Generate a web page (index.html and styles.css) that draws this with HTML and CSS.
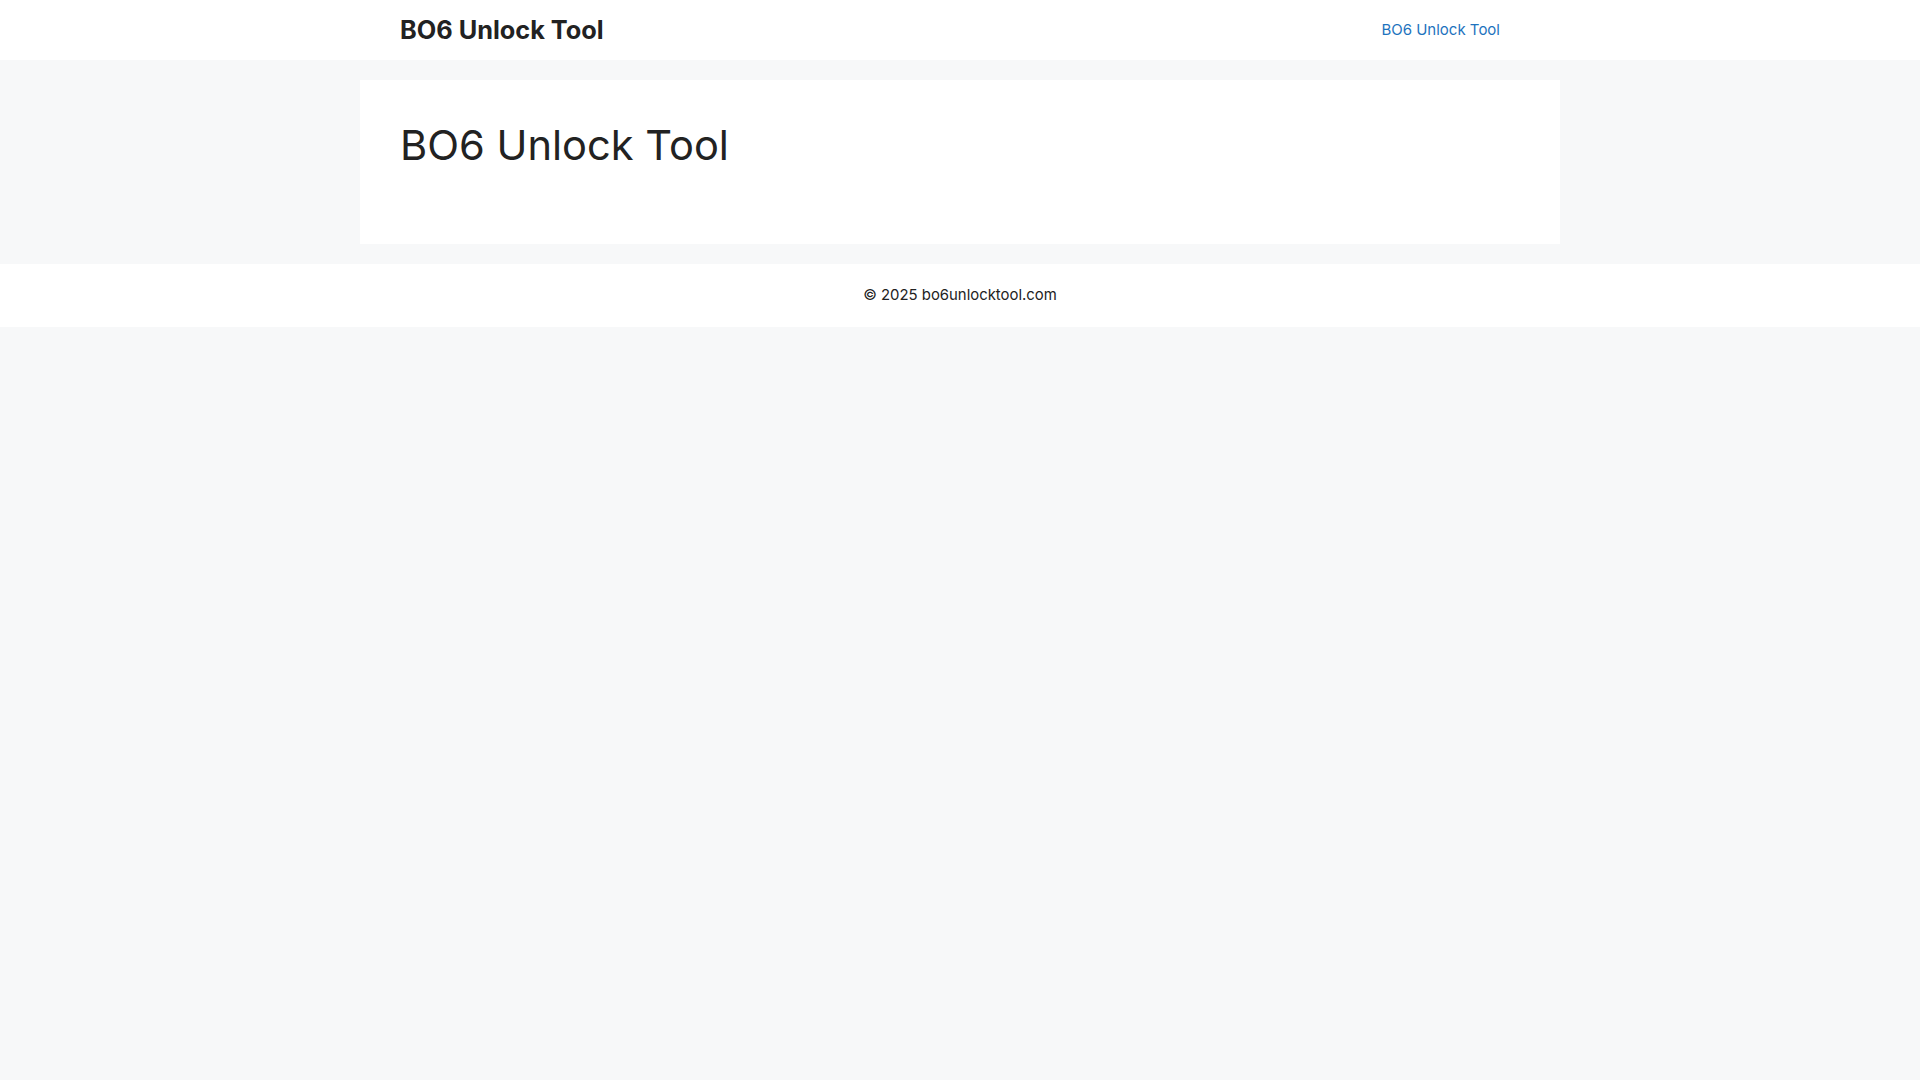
FILE: index.html
```html
<!DOCTYPE html>
<html lang="en">
<head>
<meta charset="utf-8">
<title>BO6 Unlock Tool</title>
<link rel="stylesheet" href="styles.css">
</head>
<body>
<header class="site-header">
  <div class="header-inner">
    <p class="site-title"><a href="#">BO6 Unlock Tool</a></p>
    <nav class="main-nav"><a href="#">BO6 Unlock Tool</a></nav>
  </div>
</header>
<main class="site-content">
  <article class="card">
    <h1 class="entry-title">BO6 Unlock Tool</h1>
  </article>
</main>
<footer class="site-footer">
  <div class="footer-inner">© 2025 bo6unlocktool.com</div>
</footer>
</body>
</html>
```

FILE: styles.css
```css
html, body {
  margin: 0;
  padding: 0;
}
body {
  background: #f7f8f9;
  color: #222222;
  font-family: Inter, "Noto Sans", sans-serif;
  font-size: 15px;
  line-height: 1.5;
}
a {
  text-decoration: none;
}
.site-header {
  background: #ffffff;
}
.header-inner {
  width: 1200px;
  margin: 0 auto;
  box-sizing: border-box;
  padding: 0 40px;
  height: 60px;
  display: flex;
  align-items: center;
  justify-content: space-between;
}
.site-title {
  margin: 0;
  font-size: 25.3px;
  font-weight: 700;
  line-height: 1;
}
.site-title a {
  color: #222222;
}
.main-nav a {
  display: block;
  color: #1e73be;
  font-size: 15px;
  padding: 0 20px;
  line-height: 60px;
}
.site-content {
  padding: 20px 0;
}
.card {
  width: 1200px;
  margin: 0 auto;
  box-sizing: border-box;
  background: #ffffff;
  padding: 40px;
  height: 164px;
}
.entry-title {
  margin: 0;
  font-size: 41.6px;
  font-weight: 400;
  line-height: 1.22;
}
.site-footer {
  background: #ffffff;
}
.footer-inner {
  text-align: center;
  padding: 20px 0;
  font-size: 14.9px;
  line-height: 22.5px;
}
```
